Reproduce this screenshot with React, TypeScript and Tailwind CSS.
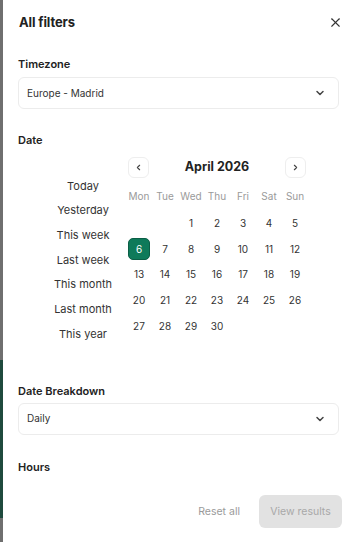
import { X, ChevronDown, ChevronLeft, ChevronRight } from 'lucide-react'

const presets = ['Today', 'Yesterday', 'This week', 'Last week', 'This month', 'Last month', 'This year']
const weekdays = ['Mon', 'Tue', 'Wed', 'Thu', 'Fri', 'Sat', 'Sun']

// April 2026 starts on a Wednesday
const days: (number | null)[] = [null, null, ...Array.from({ length: 30 }, (_, i) => i + 1)]

function Select({ value }: { value: string }) {
  return (
    <div className="flex items-center justify-between h-8 px-2 border border-[#ececec] rounded-md bg-white">
      <span className="text-[10px] text-[#333]">{value}</span>
      <ChevronDown size={12} strokeWidth={3} className="text-[#444] mr-1" />
    </div>
  )
}

export default function App() {
  return (
    <div className="w-[354px] h-[542px] flex bg-[#7a7a7a] overflow-hidden" style={{ fontFamily: 'Inter, "Noto Sans", sans-serif' }}>
      {/* backdrop sliver */}
      <div className="w-[3px] flex flex-col">
        <div className="h-[360px] bg-[#6f6f6f]" />
        <div className="h-[158px] bg-[#1f4a3d]" />
        <div className="flex-1 bg-[#6f6f6f]" />
      </div>

      <div className="flex-1 bg-white flex flex-col text-[#222]">
        {/* header */}
        <div className="flex items-center justify-between pl-4 pr-[11px] pt-[13px]">
          <h1 className="text-[13px] font-bold tracking-[-0.01em]">All filters</h1>
          <X size={15} strokeWidth={1.8} className="text-[#333]" />
        </div>

        <div className="px-[15px] flex flex-col">
          {/* timezone */}
          <p className="mt-[23px] text-[11px] font-semibold mb-[5px]">Timezone</p>
          <Select value="Europe - Madrid" />

          {/* date */}
          <p className="mt-[23px] text-[11px] font-semibold">Date</p>
          <div className="flex mt-[8px]">
            <div className="w-[130px] flex flex-col items-center pt-[21px] gap-[8.1px]">
              {presets.map((p) => (
                <span key={p} className="text-[11px] leading-[16.6px] text-[#333]">{p}</span>
              ))}
            </div>
            <div className="w-[182px] -ml-[22px]">
              <div className="flex items-center justify-between px-[2px]">
                <button className="w-[21px] h-[21px] border border-[#eee] rounded-md flex items-center justify-center">
                  <ChevronLeft size={9} strokeWidth={3} className="text-[#444]" />
                </button>
                <span className="text-[12.5px] font-bold">April 2026</span>
                <button className="w-[21px] h-[21px] border border-[#eee] rounded-md flex items-center justify-center">
                  <ChevronRight size={9} strokeWidth={3} className="text-[#444]" />
                </button>
              </div>
              <div className="grid grid-cols-7 mt-[8px]">
                {weekdays.map((d) => (
                  <span key={d} className="h-[22px] flex items-center justify-center text-[10px] text-[#9a9a9a]">{d}</span>
                ))}
              </div>
              <div className="grid grid-cols-7 gap-y-[3.7px] mt-[5px]">
                {days.map((d, i) => (
                  <div key={i} className="h-[22px] flex items-center justify-center">
                    {d === 6 ? (
                      <span className="w-[22px] h-[22px] rounded-[5px] bg-[#0e7a5a] border border-[#0b5e46] text-white text-[10px] flex items-center justify-center">6</span>
                    ) : (
                      <span className="text-[10px] text-[#333]">{d ?? ''}</span>
                    )}
                  </div>
                ))}
              </div>
            </div>
          </div>

          {/* breakdown */}
          <p className="mt-[41px] text-[11px] font-semibold mb-[3px]">Date Breakdown</p>
          <Select value="Daily" />

          <p className="mt-[24px] text-[11px] font-semibold">Hours</p>
        </div>

        {/* footer */}
        <div className="mt-auto flex items-center justify-end gap-[19px] px-[12px] pb-[14px]">
          <button className="text-[10.5px] text-[#9a9a9a]">Reset all</button>
          <button className="w-[83px] h-[33px] rounded-md bg-[#e2e2e2] text-[10.5px] text-[#a8a8a8]">View results</button>
        </div>
      </div>
    </div>
  )
}
